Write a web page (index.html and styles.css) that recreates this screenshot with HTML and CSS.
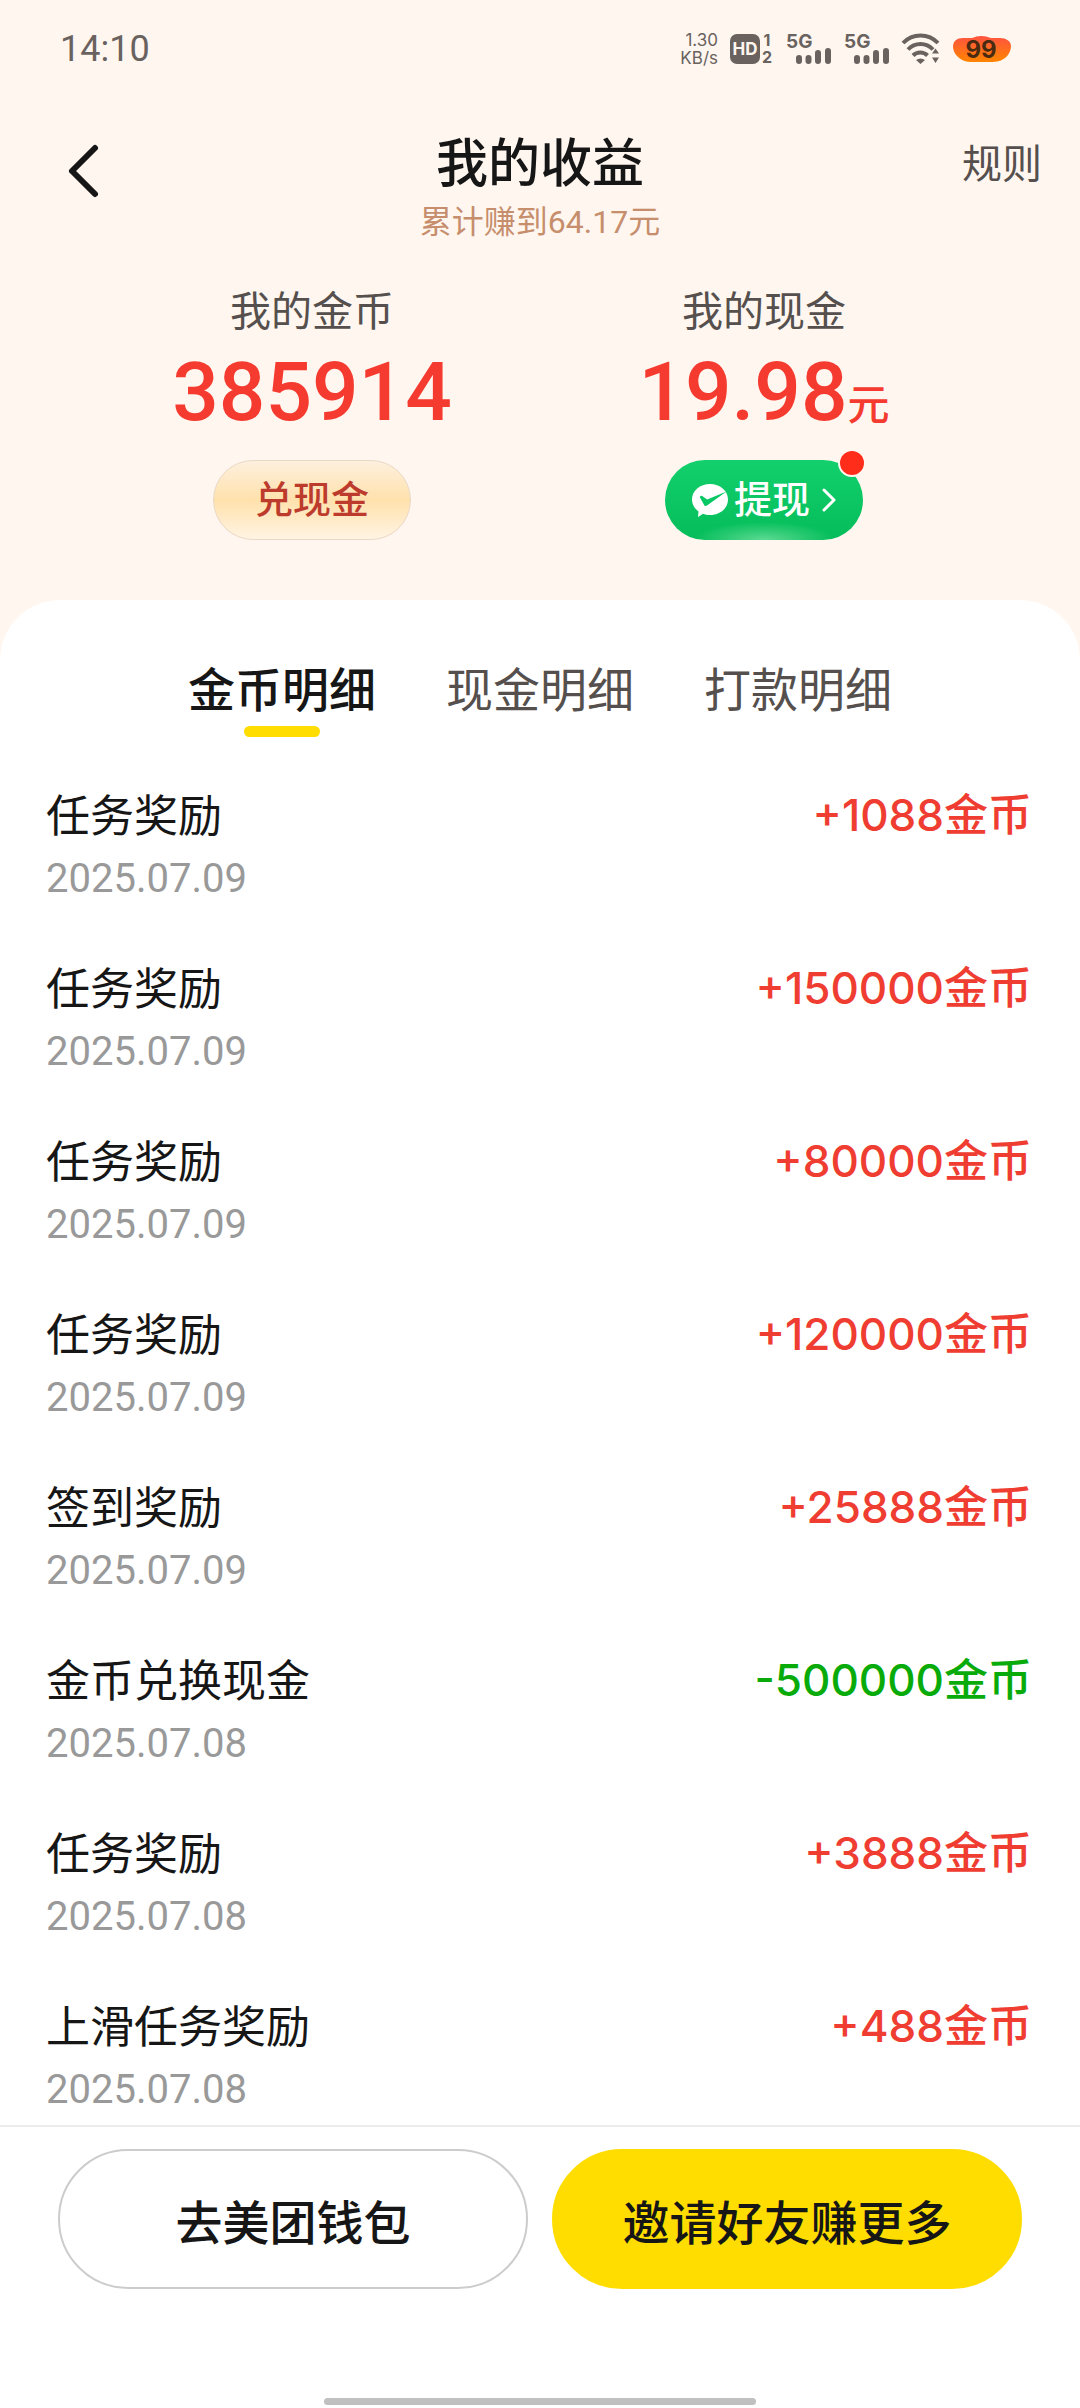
FILE: index.html
```html
<!DOCTYPE html>
<html lang="zh-CN">
<head>
<meta charset="utf-8">
<meta name="viewport" content="width=device-width, initial-scale=1">
<title>我的收益</title>
<link rel="stylesheet" href="styles.css">
</head>
<body>
<div class="page">
  <div class="status">
    <time class="clock">14:10</time>
    <div class="indicators">
      <div class="speed"><span>1.30</span><span>KB/s</span></div>
      <svg class="ico-hd" viewBox="0 0 44 36" width="44" height="36">
        <rect x="0" y="3" width="30" height="30" rx="7"/>
        <text class="hd-text" x="15" y="24" text-anchor="middle">HD</text>
        <text class="sim-text" x="37" y="15" text-anchor="middle">1</text>
        <text class="sim-text" x="37" y="32" text-anchor="middle">2</text>
      </svg>
      <svg class="ico-signal" viewBox="0 0 46 36" width="46" height="36">
        <text class="net-text" x="0" y="17">5G</text>
        <path d="M13 27v3M22.500 27v3M32 22v8M42 20v10"/>
      </svg>
      <svg class="ico-signal" viewBox="0 0 46 36" width="46" height="36">
        <text class="net-text" x="0" y="17">5G</text>
        <path d="M13 27v3M22.500 27v3M32 22v8M42 20v10"/>
      </svg>
      <svg class="ico-wifi" viewBox="0 0 38 32" width="38" height="32">
        <path class="arc" d="M1 10a24 24 0 0 1 35 0M6 16.500a17 17 0 0 1 25 0M11 22.500a10 10 0 0 1 14.500 0"/>
        <path d="M14 27q4.500-3 9 0l-4.500 4zM30 20.500l3.500-5 3.500 5zM30 24.500l3.500 5.500 3.500-5.500z"/>
      </svg>
      <svg class="ico-battery" viewBox="0 0 60 32" width="60" height="32">
        <defs><linearGradient id="heat" x1="0" y1="0" x2="0" y2="1"><stop offset="0" stop-color="#ff5340"/><stop offset="1" stop-color="#ff8500"/></linearGradient></defs>
        <path fill="url(#heat)" d="M11 5h9q9-4 19 0h9c6 0 11 3 11 8 0 7-6 16-18 16H18C8 29 1 20 1 14s4-9 10-9z"/>
        <text class="battery-text" x="29" y="25" text-anchor="middle">99</text>
      </svg>
    </div>
  </div>

  <header class="header">
    <button class="back" type="button" aria-label="返回">
      <svg viewBox="0 0 30 54" width="30" height="54"><path d="M27 4L4 27l23 23"/></svg>
    </button>
    <div class="heading">
      <h1>我的收益</h1>
      <p>累计赚到64.17元</p>
    </div>
    <a class="rules" href="#rules">规则</a>
  </header>

  <section class="balances">
    <div class="balance">
      <h2>我的金币</h2>
      <p class="amount">385914</p>
      <button class="pill pill-gold" type="button">兑现金</button>
    </div>
    <div class="balance">
      <h2>我的现金</h2>
      <p class="amount">19.98<small>元</small></p>
      <button class="pill pill-green" type="button">
        <svg viewBox="0 0 36 33" width="36" height="33"><path fill="#fff" d="M18 0c10 0 18 6.500 18 15.500S28 31 18 31c-3 0-5-.4-7-1.200L6 33l.5-5.500C2.500 24.500 0 20.500 0 15.500 0 6.500 8 0 18 0z"/><path fill="#07c864" d="M8 12.500c1-1 2-.8 3.200.2l4 2.800L34.500 7.500 15 21.500c-1.200.8-2.500.5-3-.8L8 13.500z"/></svg>
        <span>提现</span>
        <svg class="chevron" viewBox="0 0 14 24" width="14" height="24"><path d="M2 2l10 10L2 22"/></svg>
        <i class="dot"></i>
      </button>
    </div>
  </section>

  <main class="panel">
    <nav class="tabs">
      <a class="tab active" href="#coins" aria-current="page">金币明细</a>
      <a class="tab" href="#cash">现金明细</a>
      <a class="tab" href="#payout">打款明细</a>
    </nav>
    <ul class="records">
      <li><div><h3>任务奖励</h3><time>2025.07.09</time></div><strong>+1088金币</strong></li>
      <li><div><h3>任务奖励</h3><time>2025.07.09</time></div><strong>+150000金币</strong></li>
      <li><div><h3>任务奖励</h3><time>2025.07.09</time></div><strong>+80000金币</strong></li>
      <li><div><h3>任务奖励</h3><time>2025.07.09</time></div><strong>+120000金币</strong></li>
      <li><div><h3>签到奖励</h3><time>2025.07.09</time></div><strong>+25888金币</strong></li>
      <li><div><h3>金币兑换现金</h3><time>2025.07.08</time></div><strong class="spent">-500000金币</strong></li>
      <li><div><h3>任务奖励</h3><time>2025.07.08</time></div><strong>+3888金币</strong></li>
      <li><div><h3>上滑任务奖励</h3><time>2025.07.08</time></div><strong>+488金币</strong></li>
    </ul>
  </main>

  <footer class="footer">
    <div class="actions">
      <button class="action" type="button">去美团钱包</button>
      <button class="action action-primary" type="button">邀请好友赚更多</button>
    </div>
    <div class="home-bar"></div>
  </footer>
</div>
</body>
</html>
```
FILE: styles.css
```css
* { box-sizing: border-box; margin: 0; padding: 0; }

body {
  background: #fff;
  color: #161616;
  font-family: Roboto, "Noto Sans CJK SC", sans-serif;
}

button { border: 0; background: none; font: inherit; color: inherit; cursor: pointer; }
a { color: inherit; text-decoration: none; }
svg { display: block; flex: none; overflow: visible; }

.page {
  display: flex;
  flex-direction: column;
  min-height: 100vh;
  background: #fff6f0;
}

/* Status bar */
.status {
  display: flex;
  justify-content: space-between;
  align-items: center;
  height: 98px;
  padding: 0 68px 0 60px;
  color: #69625e;
}
.clock { font-size: 36px; line-height: 40px; }
.indicators { display: flex; align-items: center; gap: 12px; }
.speed {
  display: flex;
  flex-direction: column;
  align-items: flex-end;
  font-family: Inter, sans-serif;
  font-size: 17px;
  line-height: 18px;
}
.indicators svg { fill: #69625e; }
.indicators text { font-family: Inter, sans-serif; font-weight: 700; }
.indicators .hd-text { font-size: 17px; fill: #fff6f0; }
.indicators .sim-text { font-size: 16px; }
.indicators .net-text { font-size: 19px; }
.ico-signal path { stroke: #69625e; stroke-width: 6; stroke-linecap: round; }
.ico-wifi .arc { fill: none; stroke: #69625e; stroke-width: 4; }
.indicators .battery-text { font-size: 24px; fill: #4a2a10; }

/* Header */
.header {
  display: grid;
  grid-template-columns: 1fr auto 1fr;
  padding: 32px 38px 0;
  height: 156px;
}
.back { justify-self: start; align-self: start; padding: 14px 30px; }
.back path, .chevron path { fill: none; stroke: #161616; stroke-linecap: round; stroke-linejoin: round; stroke-width: 6; }
.heading { text-align: center; }
.heading h1 { font-size: 52px; line-height: 70px; font-weight: 500; }
.heading p { font-size: 32px; line-height: 44px; color: #c68e6c; }
.rules { justify-self: end; font-size: 40px; line-height: 70px; color: #55504d; }

/* Balances */
.balances {
  display: grid;
  grid-template-columns: 1fr 1fr;
  padding: 28px 90px 60px 86px;
}
.balance { display: flex; flex-direction: column; align-items: center; }
.balance h2 { font-size: 41px; line-height: 60px; font-weight: 400; color: #55504d; }
.amount { font-size: 82px; line-height: 100px; font-weight: 500; color: #f53b2f; }
.amount small { font-size: 42px; line-height: 1; font-weight: 500; }
.pill {
  position: relative;
  display: flex;
  align-items: center;
  justify-content: center;
  gap: 6px;
  width: 198px;
  height: 80px;
  margin-top: 18px;
  border-radius: 40px;
  font-size: 38px;
  line-height: 76px;
  font-weight: 500;
}
.pill-gold {
  border: 1px solid #ead8c5;
  background: linear-gradient(#fdf0de, #ffe1ac 50%, #fff4e3);
  color: #bd3b2c;
}
.pill-green {
  background: radial-gradient(ellipse 70px 18px at 50% 100%, #5cda92, transparent), linear-gradient(#12d06c, #05bd5a);
  color: #fff;
}
.pill-green .chevron { margin-left: 6px; }
.pill-green .chevron path { stroke: #fff; stroke-width: 3; }
.dot {
  position: absolute;
  top: -11px;
  right: -3px;
  width: 28px;
  height: 28px;
  border: 2px solid #fff6f0;
  border-radius: 50%;
  background: #ff2d19;
}

/* Records */
.panel {
  flex: 1;
  border-radius: 60px 60px 0 0;
  background: #fff;
}
.tabs { display: flex; justify-content: center; gap: 70px; padding-top: 56px; }
.tab {
  display: flex;
  flex-direction: column;
  align-items: center;
  font-size: 47px;
  line-height: 70px;
  color: #55504d;
}
.tab.active { font-weight: 500; color: #161616; }
.tab.active::after { content: ""; width: 76px; height: 11px; border-radius: 6px; background: #ffdd00; }
.records {
  display: flex;
  flex-direction: column;
  gap: 49px;
  padding: 48px 48px 4px 46px;
  list-style: none;
}
.records li { display: flex; justify-content: space-between; align-items: flex-start; }
.records h3 { font-size: 44px; line-height: 64px; font-weight: 400; }
.records time { display: block; font-size: 40px; line-height: 60px; color: #999; }
.records strong {
  font-family: Inter, "Noto Sans CJK SC", sans-serif;
  font-size: 44px;
  line-height: 60px;
  font-weight: 500;
  color: #ef3d32;
}
.records .spent { color: #09ab0b; }

/* Bottom actions */
.footer { border-top: 2px solid #ececec; background: #fff; padding-bottom: 3px; }
.actions { display: flex; gap: 24px; padding: 22px 58px 109px; }
.action {
  flex: 1;
  height: 140px;
  border: 2px solid #ccc;
  border-radius: 70px;
  font-size: 47px;
  font-weight: 500;
}
.action-primary { border-color: #ffdd00; background: #ffdd00; }
.home-bar { width: 40%; height: 7px; margin: 0 auto; border-radius: 4px; background: #c0c0c0; }
```
